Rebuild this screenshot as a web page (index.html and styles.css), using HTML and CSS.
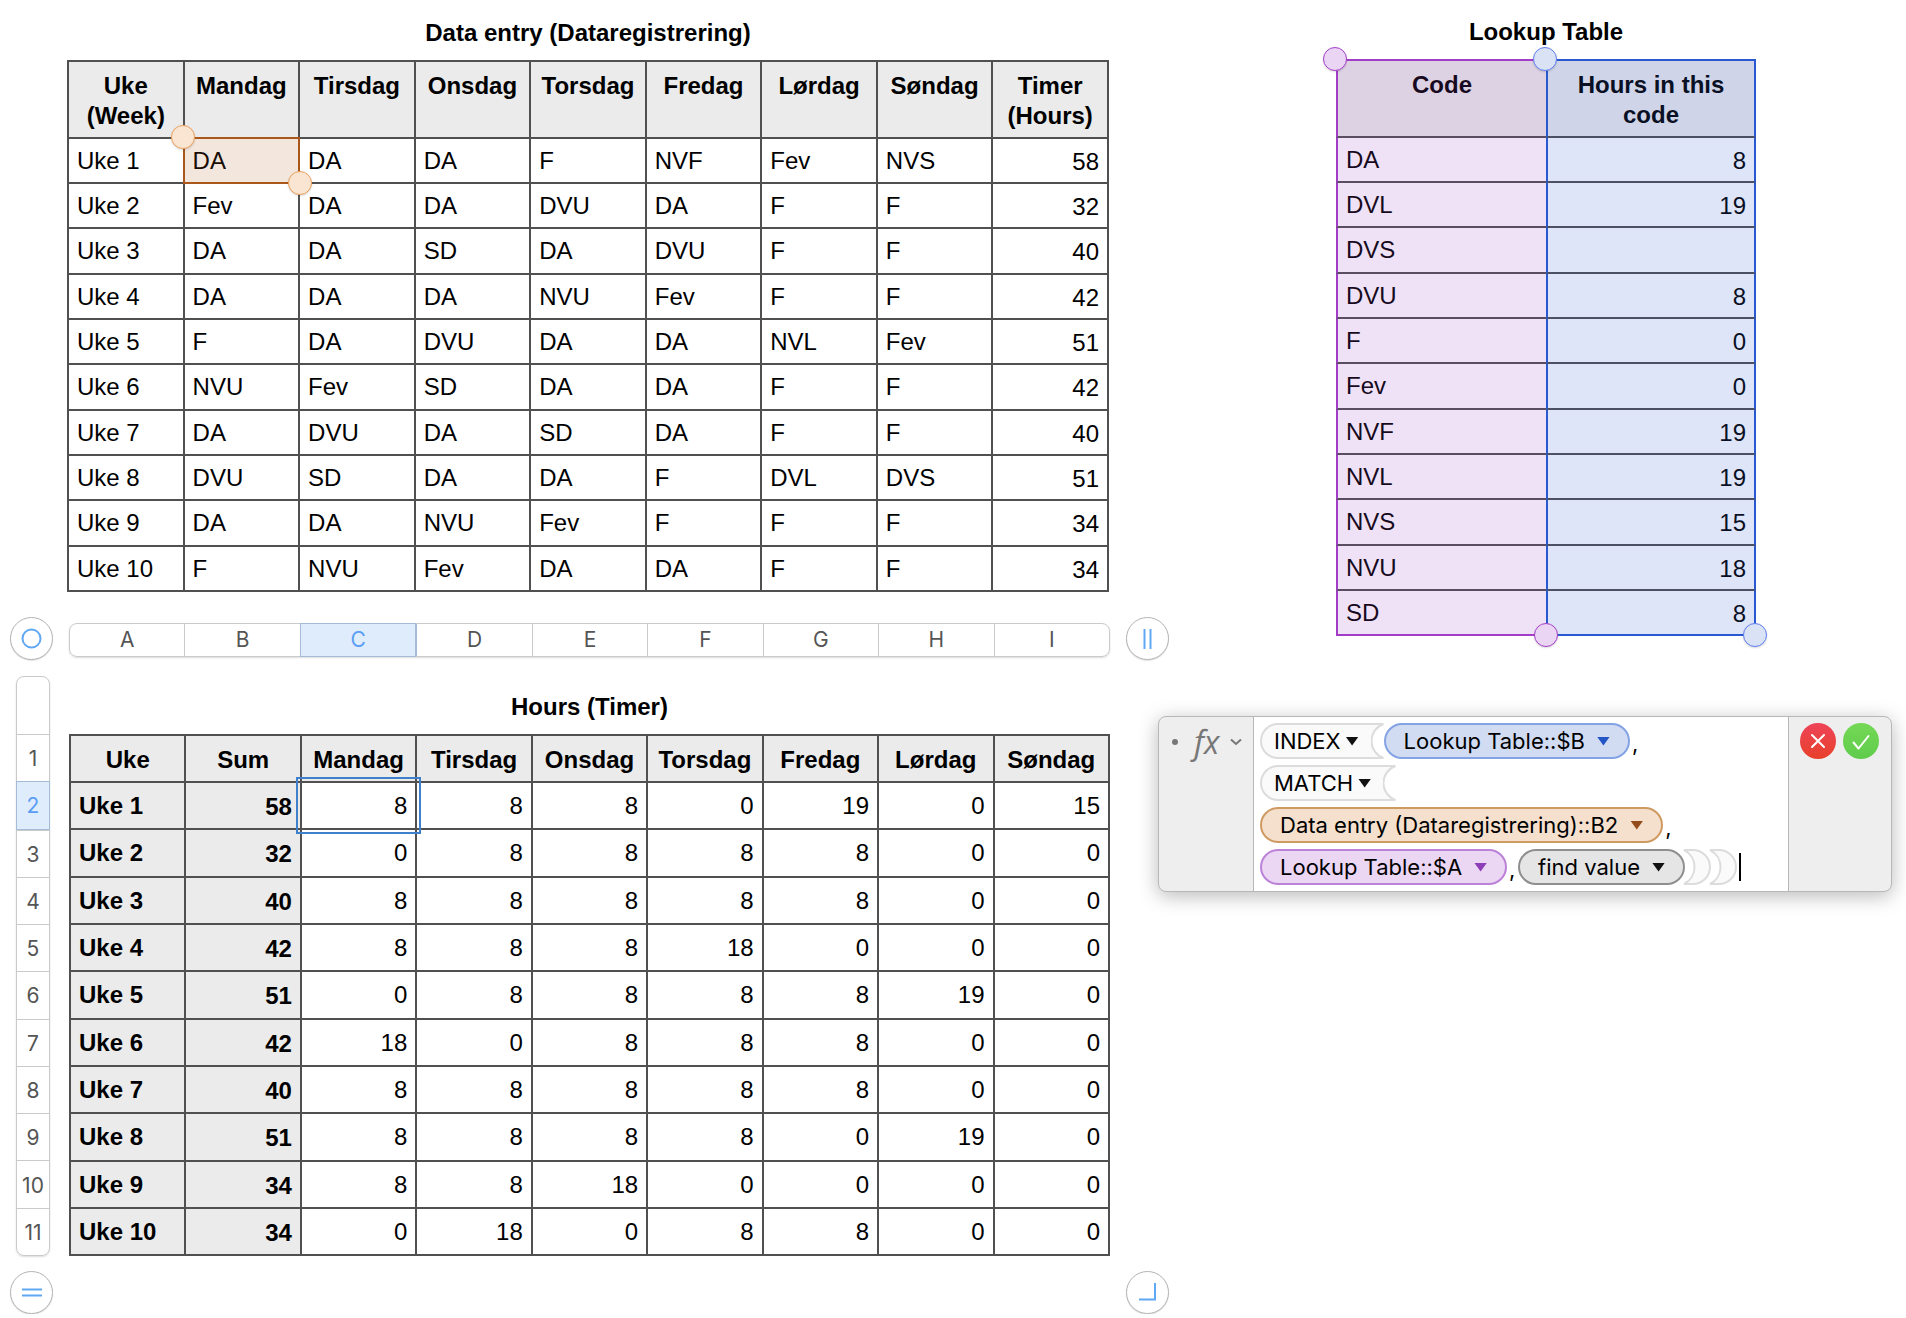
FILE: index.html
```html
<!DOCTYPE html>
<html lang="nb">
<head>
<meta charset="utf-8">
<title>Data entry and hours</title>
<meta name="viewport" content="width=device-width, initial-scale=1">
<link rel="stylesheet" href="styles.css">
</head>
<body>
<main class="canvas">
  <div class="pane">
    <section class="data-entry">
      <h2 id="entry-title">Data entry (Dataregistrering)</h2>
      <table class="grid entry" aria-labelledby="entry-title">
        <thead>
          <tr><th>Uke (Week)</th><th>Mandag</th><th>Tirsdag</th><th>Onsdag</th><th>Torsdag</th><th>Fredag</th><th>Lørdag</th><th>Søndag</th><th>Timer (Hours)</th></tr>
        </thead>
        <tbody>
          <tr><td>Uke 1</td><td class="anchor">DA<span class="reference"><span class="handle orange start"></span><span class="handle orange end"></span></span></td><td>DA</td><td>DA</td><td>F</td><td>NVF</td><td>Fev</td><td>NVS</td><td class="num">58</td></tr>
          <tr><td>Uke 2</td><td>Fev</td><td>DA</td><td>DA</td><td>DVU</td><td>DA</td><td>F</td><td>F</td><td class="num">32</td></tr>
          <tr><td>Uke 3</td><td>DA</td><td>DA</td><td>SD</td><td>DA</td><td>DVU</td><td>F</td><td>F</td><td class="num">40</td></tr>
          <tr><td>Uke 4</td><td>DA</td><td>DA</td><td>DA</td><td>NVU</td><td>Fev</td><td>F</td><td>F</td><td class="num">42</td></tr>
          <tr><td>Uke 5</td><td>F</td><td>DA</td><td>DVU</td><td>DA</td><td>DA</td><td>NVL</td><td>Fev</td><td class="num">51</td></tr>
          <tr><td>Uke 6</td><td>NVU</td><td>Fev</td><td>SD</td><td>DA</td><td>DA</td><td>F</td><td>F</td><td class="num">42</td></tr>
          <tr><td>Uke 7</td><td>DA</td><td>DVU</td><td>DA</td><td>SD</td><td>DA</td><td>F</td><td>F</td><td class="num">40</td></tr>
          <tr><td>Uke 8</td><td>DVU</td><td>SD</td><td>DA</td><td>DA</td><td>F</td><td>DVL</td><td>DVS</td><td class="num">51</td></tr>
          <tr><td>Uke 9</td><td>DA</td><td>DA</td><td>NVU</td><td>Fev</td><td>F</td><td>F</td><td>F</td><td class="num">34</td></tr>
          <tr><td>Uke 10</td><td>F</td><td>NVU</td><td>Fev</td><td>DA</td><td>DA</td><td>F</td><td>F</td><td class="num">34</td></tr>
        </tbody>
      </table>
    </section>

    <div class="active-table">
      <button class="round" aria-label="Select table">
        <svg width="41" height="41" viewBox="0 0 41 41"><circle cx="20.500" cy="20.500" r="9"/></svg>
      </button>
      <div class="columns">
        <button>A</button><button>B</button><button class="on">C</button><button>D</button><button>E</button><button>F</button><button>G</button><button>H</button><button>I</button>
      </div>
      <button class="round" aria-label="Add columns">
        <svg width="41" height="41" viewBox="0 0 41 41"><path d="M17.500 11v20M23.500 11v20"/></svg>
      </button>

      <div class="rows">
        <span class="title-row"></span>
        <button>1</button><button class="on">2</button><button>3</button><button>4</button><button>5</button><button>6</button><button>7</button><button>8</button><button>9</button><button>10</button><button>11</button>
      </div>
      <section class="hours-section">
        <h2 id="hours-title">Hours (Timer)</h2>
        <table class="grid hours" aria-labelledby="hours-title">
          <thead>
            <tr><th>Uke</th><th>Sum</th><th>Mandag</th><th>Tirsdag</th><th>Onsdag</th><th>Torsdag</th><th>Fredag</th><th>Lørdag</th><th>Søndag</th></tr>
          </thead>
          <tbody>
            <tr><th>Uke 1</th><th class="num">58</th><td class="anchor">8<span class="selection"></span></td><td>8</td><td>8</td><td>0</td><td>19</td><td>0</td><td>15</td></tr>
            <tr><th>Uke 2</th><th class="num">32</th><td>0</td><td>8</td><td>8</td><td>8</td><td>8</td><td>0</td><td>0</td></tr>
            <tr><th>Uke 3</th><th class="num">40</th><td>8</td><td>8</td><td>8</td><td>8</td><td>8</td><td>0</td><td>0</td></tr>
            <tr><th>Uke 4</th><th class="num">42</th><td>8</td><td>8</td><td>8</td><td>18</td><td>0</td><td>0</td><td>0</td></tr>
            <tr><th>Uke 5</th><th class="num">51</th><td>0</td><td>8</td><td>8</td><td>8</td><td>8</td><td>19</td><td>0</td></tr>
            <tr><th>Uke 6</th><th class="num">42</th><td>18</td><td>0</td><td>8</td><td>8</td><td>8</td><td>0</td><td>0</td></tr>
            <tr><th>Uke 7</th><th class="num">40</th><td>8</td><td>8</td><td>8</td><td>8</td><td>8</td><td>0</td><td>0</td></tr>
            <tr><th>Uke 8</th><th class="num">51</th><td>8</td><td>8</td><td>8</td><td>8</td><td>0</td><td>19</td><td>0</td></tr>
            <tr><th>Uke 9</th><th class="num">34</th><td>8</td><td>8</td><td>18</td><td>0</td><td>0</td><td>0</td><td>0</td></tr>
            <tr><th>Uke 10</th><th class="num">34</th><td>0</td><td>18</td><td>0</td><td>8</td><td>8</td><td>0</td><td>0</td></tr>
          </tbody>
        </table>
      </section>

      <button class="round add-rows" aria-label="Add rows">
        <svg width="41" height="41" viewBox="0 0 41 41"><path d="M11 17.500h20M11 23.500h20"/></svg>
      </button>
      <button class="round resize" aria-label="Add rows and columns">
        <svg width="41" height="41" viewBox="0 0 41 41"><path d="M12 27.500h16M28 11v17.500"/></svg>
      </button>
    </div>
  </div>

  <div class="side">
    <section class="lookup-section">
      <h2 id="lookup-title">Lookup Table</h2>
      <div class="lookup-frame">
        <table class="lookup" aria-labelledby="lookup-title">
          <thead><tr><th>Code</th><th>Hours in this code</th></tr></thead>
          <tbody>
            <tr><td>DA</td><td>8</td></tr>
            <tr><td>DVL</td><td>19</td></tr>
            <tr><td>DVS</td><td></td></tr>
            <tr><td>DVU</td><td>8</td></tr>
            <tr><td>F</td><td>0</td></tr>
            <tr><td>Fev</td><td>0</td></tr>
            <tr><td>NVF</td><td>19</td></tr>
            <tr><td>NVL</td><td>19</td></tr>
            <tr><td>NVS</td><td>15</td></tr>
            <tr><td>NVU</td><td>18</td></tr>
            <tr><td>SD</td><td>8</td></tr>
          </tbody>
        </table>
        <span class="handle purple top-left"></span>
        <span class="handle blue top-mid"></span>
        <span class="handle purple bottom-mid"></span>
        <span class="handle blue bottom-right"></span>
      </div>
    </section>

    <section class="editor" aria-label="Formula editor">
      <div class="editor-menu">
        <span class="dot"></span>
        <button class="fx">fx<svg width="12" height="8" viewBox="0 0 12 8"><path d="M1 1.500l5 4.500 5-4.500"/></svg></button>
      </div>
      <div class="formula">
        <div class="line">
          <button class="function"><span>INDEX<i class="arrow"></i></span><svg width="13" height="36" viewBox="0 0 13 36"><path class="fill" d="M0 1H12.500A18 18 0 0 0 12.500 35H0Z"/><path d="M0 1H12.500A18 18 0 0 0 12.500 35H0"/></svg></button>
          <button class="chip blue-chip">Lookup Table::$B<i class="arrow"></i></button>
          <span class="comma">,</span>
        </div>
        <div class="line">
          <button class="function"><span>MATCH<i class="arrow"></i></span><svg width="13" height="36" viewBox="0 0 13 36"><path class="fill" d="M0 1H12.500A18 18 0 0 0 12.500 35H0Z"/><path d="M0 1H12.500A18 18 0 0 0 12.500 35H0"/></svg></button>
        </div>
        <div class="line">
          <button class="chip orange-chip">Data entry (Dataregistrering)::B2<i class="arrow"></i></button>
          <span class="comma">,</span>
        </div>
        <div class="line">
          <button class="chip purple-chip">Lookup Table::$A<i class="arrow"></i></button>
          <span class="comma">,</span>
          <button class="chip gray-chip">find value<i class="arrow"></i></button>
          <svg class="close" width="28" height="36" viewBox="0 0 28 36"><path d="M1 1H10A17 17 0 0 1 10 35H1A19 19 0 0 0 1 1Z"/></svg>
          <svg class="close" width="28" height="36" viewBox="0 0 28 36"><path d="M1 1H10A17 17 0 0 1 10 35H1A19 19 0 0 0 1 1Z"/></svg>
          <span class="caret"></span>
        </div>
      </div>
      <div class="editor-actions">
        <button class="cancel" aria-label="Cancel"><svg width="36" height="36" viewBox="0 0 36 36"><path d="M12 12l12 12M24 12L12 24"/></svg></button>
        <button class="accept" aria-label="Accept"><svg width="36" height="36" viewBox="0 0 36 36"><path d="M10.500 19.500l5 6L25.500 13"/></svg></button>
      </div>
    </section>
  </div>
</main>
</body>
</html>
```
FILE: styles.css
```css
* { box-sizing: border-box; }

body {
  margin: 0;
  background: #fff;
  color: #000;
  font-family: "Liberation Sans", Arial, sans-serif;
  font-size: 24px;
  line-height: 30px;
}

button {
  margin: 0;
  padding: 0;
  border: 0;
  background: none;
  color: inherit;
  font: inherit;
}

svg { display: block; }

h2 {
  margin: 0 0 12px;
  font-size: 24px;
  line-height: 30px;
  font-weight: bold;
  text-align: center;
}

.canvas {
  display: grid;
  grid-template-columns: 1169fr 737fr;
  align-items: start;
}

/* Tables */
table {
  width: 100%;
  table-layout: fixed;
  border-collapse: separate;
  border-spacing: 0;
}

th, td {
  padding: 7px 8px 6px;
  text-align: left;
  vertical-align: top;
}

thead th {
  padding: 9px 7px 6px;
  text-align: center;
}

.grid {
  border: solid #505050;
  border-width: 2px 0 0 2px;
}

.grid th, .grid td {
  border: solid #505050;
  border-width: 0 2px 2px 0;
}

.grid th { background: #ebebeb; }

.data-entry { padding: 18px 60px 0 67px; }

.entry tbody tr, .lookup tbody tr { height: 45px; }
.entry tbody tr:nth-child(3n), .lookup tbody tr:nth-child(3n) { height: 46px; }

.grid .num { padding-top: 8px; padding-bottom: 5px; text-align: right; }

.hours tr { height: 47px; }
.hours tbody tr:nth-child(3n + 2) { height: 48px; }
.hours td { text-align: right; }
.hours th, .hours td { padding-top: 8px; padding-bottom: 6px; }
.hours .num { padding-top: 9px; padding-bottom: 6px; }
.hours thead th { padding-top: 9px; }
.hours thead th, .entry thead th { padding-left: 4px; padding-right: 4px; }

/* Marks over cells */
.anchor { position: relative; }

.reference {
  position: absolute;
  inset: -2px;
  z-index: 1;
  border: 2px solid #a9571b;
  background: rgba(169, 87, 27, 0.15);
}

.selection {
  position: absolute;
  inset: -6px;
  z-index: 1;
  border: 2px solid #3f80cc;
}

.handle {
  position: absolute;
  width: 24px;
  height: 24px;
  border: 1px solid;
  border-radius: 50%;
  box-shadow: 0 1px 2px rgba(0, 0, 0, 0.15);
}

.orange { background: #f9e5d1; border-color: #eda15c; }
.purple { background: #ead6f4; border-color: #a63fc9; }
.blue { background: #dae3f6; border-color: #5f7df0; }

.start { left: -14px; top: -14px; }
.end { right: -14px; bottom: -13px; }
.top-left { left: -13px; top: -12px; }
.top-mid { left: calc(50% - 13px); top: -12px; }
.bottom-mid { left: calc(50% - 12px); bottom: -11px; }
.bottom-right { right: -11px; bottom: -11px; }

/* Table with its column and row bars */
.active-table {
  display: grid;
  grid-template-columns: 43px 1fr 43px;
  grid-template-rows: 44px auto 43px;
  column-gap: 16px;
  row-gap: 15px;
  margin-top: 25px;
  padding-left: 10px;
}

.round {
  width: 43px;
  height: 43px;
  border: 1px solid #b4b4b4;
  border-radius: 50%;
  background: #fff;
  box-shadow: 0 1px 1px rgba(0, 0, 0, 0.12);
}

.round svg { fill: none; stroke: #60a8f4; stroke-width: 2; }

.add-rows { grid-column: 1; }
.resize { grid-column: 3; }

.columns, .rows {
  display: flex;
  border: 1px solid #cacaca;
  border-radius: 8px;
  box-shadow: 0 1px 2px rgba(0, 0, 0, 0.14);
  color: #555;
  font-family: Inter, sans-serif;
  font-size: 21px;
}

.columns { height: 34px; margin-top: 6px; }
.rows { flex-direction: column; width: 34px; margin-left: 6px; }

.columns button, .rows button { flex: 1 1 0; }
.columns button + button { border-left: 1px solid #cacaca; }
.rows button { padding-top: 2px; border-top: 1px solid #cacaca; }

.title-row { flex: 0 0 57px; }

.columns .on, .rows .on {
  background: #dfecfc;
  color: #5a9df5;
}

.columns .on {
  margin: -1px 0;
  border: 1px solid #a5bcd9;
}

.columns button.on + button { border-left-color: #a5bcd9; }

.rows .on {
  margin: 0 -1px;
  border: 1px solid #a5bcd9;
}

.hours-section { padding-top: 16px; }

/* Lookup table */
.lookup-section { padding: 17px 150px 0 167px; }
.lookup-frame { position: relative; }

.lookup th, .lookup td { border-bottom: 2px solid #5a4d62; }

.lookup th:first-child, .lookup td:first-child {
  border-left: 2px solid #a33dc8;
  background: #efe2f6;
  color: #170a20;
}

.lookup th:last-child, .lookup td:last-child {
  border-left: 2px solid #2859d0;
  border-right: 2px solid #2859d0;
  border-bottom-color: #4b5064;
  background: #dfe5f8;
  color: #0a1024;
}

.lookup td:last-child { padding-top: 8px; padding-bottom: 5px; text-align: right; }

.lookup thead th:first-child { border-top: 2px solid #a33dc8; background: #ddd1e4; }
.lookup thead th:last-child { border-top: 2px solid #2859d0; padding: 9px 20px 6px; background: #cfd4e8; }
.lookup tbody tr:last-child td:first-child { border-bottom-color: #a33dc8; }
.lookup tbody tr:last-child td:last-child { border-bottom-color: #2859d0; }

/* Formula editor */
.editor {
  display: flex;
  margin: 80px 14px 0 -11px;
  border: 1px solid #b8b8b8;
  border-radius: 8px;
  background: #eee;
  box-shadow: 0 4px 20px rgba(0, 0, 0, 0.28);
  font-family: Inter, sans-serif;
  font-size: 22px;
}

.editor-menu {
  display: flex;
  align-items: center;
  align-self: flex-start;
  gap: 16px;
  width: 94px;
  height: 50px;
  padding-left: 13px;
}

.dot {
  width: 6px;
  height: 6px;
  border-radius: 50%;
  background: #777;
}

.fx {
  display: flex;
  align-items: center;
  gap: 11px;
  color: #777;
  font-family: "Open Sans", sans-serif;
  font-size: 32px;
  font-style: italic;
}

.fx svg { fill: none; stroke: #777; stroke-width: 2; }

.formula {
  display: flex;
  flex: 1;
  flex-direction: column;
  gap: 6px;
  padding: 6px;
  border: solid #b8b8b8;
  border-width: 0 1px;
  background: #fff;
}

.line { display: flex; height: 36px; }

.chip {
  display: flex;
  align-items: center;
  gap: 12px;
  padding: 0 18px;
  border: 2px solid;
  border-radius: 18px;
  white-space: nowrap;
}

.blue-chip { background: #d1dcf3; border-color: #84a3e4; }
.orange-chip { background: #f5e0cd; border-color: #cf9962; }
.purple-chip { background: #ebd6f4; border-color: #bb82d8; }
.gray-chip { position: relative; z-index: 1; background: #e5e5e5; border-color: #8f8f8f; }

.arrow {
  width: 13px;
  height: 9px;
  background: #111;
  clip-path: polygon(0 0, 100% 0, 50% 100%);
}

.blue-chip .arrow { background: #2455c5; }
.orange-chip .arrow { background: #944b1c; }
.purple-chip .arrow { background: #8e3db8; }

.function { display: flex; }

.function span {
  display: flex;
  align-items: center;
  gap: 5px;
  height: 36px;
  padding: 0 12px;
  border: 2px solid #dcdcdc;
  border-right: 0;
  border-radius: 18px 0 0 18px;
  background: #fafafa;
}

.function svg, .close { fill: none; stroke: #dcdcdc; stroke-width: 2; }
.function .fill { fill: #fafafa; stroke: none; }
.close { margin-left: -2px; fill: #fafafa; }

.comma { width: 11px; padding: 5px 0 0 2px; }

.caret { width: 2px; height: 28px; margin: 4px 0 0 2px; background: #000; }

.editor-actions {
  display: flex;
  gap: 7px;
  width: 102px;
  padding: 6px 0 0 11px;
}

.editor-actions button { width: 36px; height: 36px; border-radius: 50%; }
.editor-actions svg { fill: none; stroke: #fff; stroke-width: 2; stroke-linecap: round; stroke-linejoin: round; }
.cancel { background: linear-gradient(#ee4459, #e8402a); }
.accept { background: linear-gradient(#74d855, #60cc4c); }
```
